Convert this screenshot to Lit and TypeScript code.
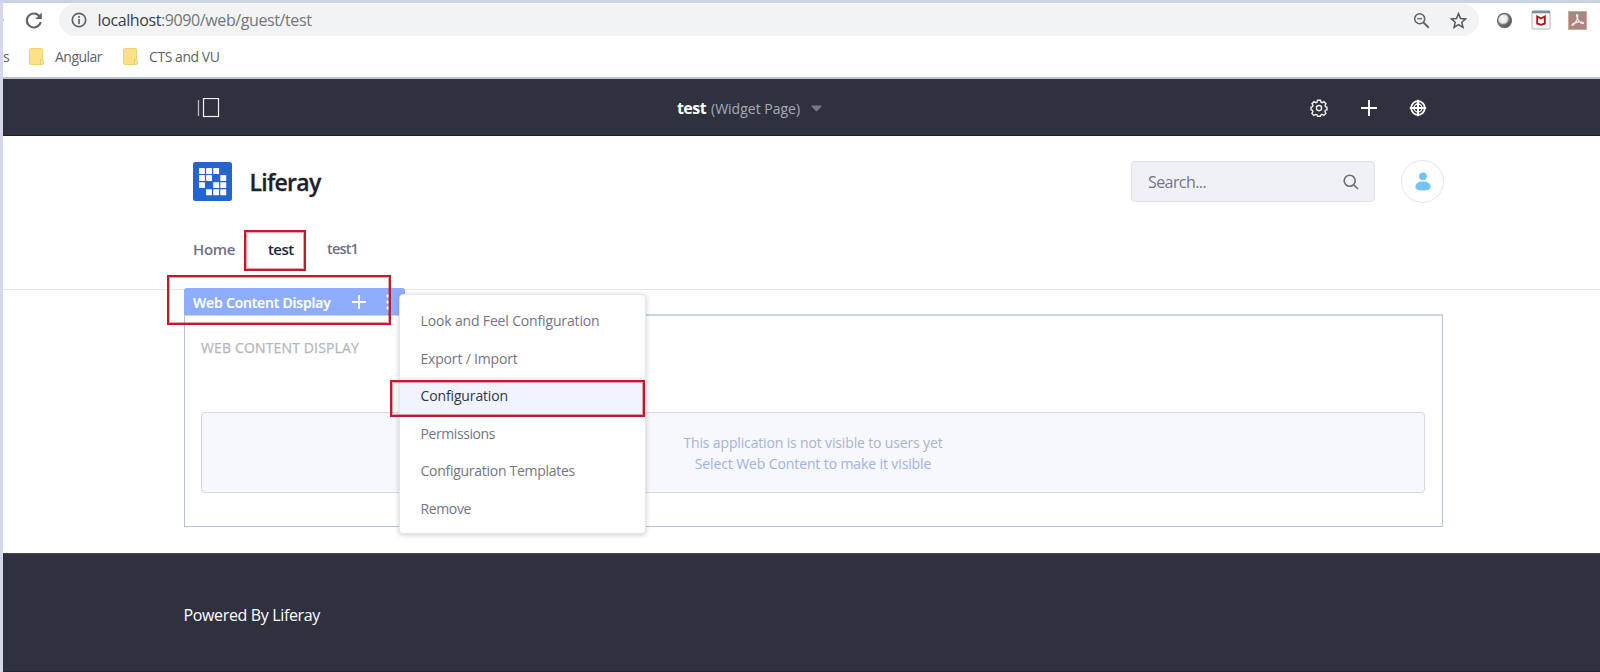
import { LitElement, html, svg, css } from "lit";
import { customElement } from "lit/decorators.js";
import { styleMap } from "lit/directives/style-map.js";

interface MenuItem {
  label: string;
  tracking: number;
  active?: boolean;
}

const MENU: MenuItem[] = [
  { label: "Look and Feel Configuration", tracking: -0.153 },
  { label: "Export / Import", tracking: -0.186 },
  { label: "Configuration", tracking: -0.138, active: true },
  { label: "Permissions", tracking: -0.414 },
  { label: "Configuration Templates", tracking: -0.277 },
  { label: "Remove", tracking: -0.373 },
];

// Filled cells of the brand mark, on a 4 x 4 grid.
const LOGO_CELLS = [
  [0, 0], [1, 0], [2, 0],
  [0, 1], [1, 1], [3, 1],
  [0, 2], [2, 2], [3, 2],
  [1, 3], [2, 3], [3, 3],
];

@customElement("browser-bar")
class BrowserBar extends LitElement {
  static styles = css`
    :host { display: block; height: 74px; background: #fff; border-bottom: 2px solid #bfc2cc; }
    svg { display: block; flex: none; }
    .row { display: flex; align-items: center; height: 34px; }
    .back { width: 22px; height: 20px; flex: none; }
    .omnibox { display: flex; align-items: center; margin-left: 16px; height: 32px; width: 1420px; flex: none; box-sizing: border-box; border-radius: 16px; background: #f2f3f5; padding: 0 12px; color: #73767b; }
    .url { flex: 1; margin-left: 10.5px; font-size: 16px; letter-spacing: -0.394px; line-height: 31px; }
    .host { color: #3c4046; }
    .tools { display: flex; gap: 20px; }
    .exts { display: flex; align-items: center; gap: 17.5px; margin-left: 17px; }
    .marks { display: flex; align-items: center; height: 38px; font-size: 14px; color: #606469; }
    .cut { width: 26px; }
    .angular { margin-left: 11px; letter-spacing: -0.523px; }
    .cts { margin-left: 11.5px; letter-spacing: -0.446px; }
    .second { margin-left: 20.5px; }
  `;

  private folder(cls = "") {
    return html`<svg class=${cls} width="15" height="17" viewBox="0 0 15 17">
      <rect x=".5" y=".5" width="13" height="16" rx="1" fill="#fbe184" stroke="#efd372"></rect>
      <path d="M11.5 11.5q3 0 3 2.5v1q0 1.5-1.5 1.5h-1.5z" fill="#fde98f" stroke="#e5c65a" stroke-width=".8"></path>
    </svg>`;
  }

  render() {
    return html`
      <div class="row">
        <svg class="back" viewBox="0 0 22 20"><circle cx="0" cy="10" r="1" fill="#b5b9bf"></circle></svg>
        <svg width="18" height="18" viewBox="0 0 18 18" fill="none">
          <path d="M14.6 5.4A7 7 0 1 0 15.7 11" stroke="#5f6368" stroke-width="2.1"></path>
          <path d="M16.8 1.5V8H10.300z" fill="#5f6368"></path>
        </svg>
        <div class="omnibox">
          <svg width="16" height="16" viewBox="0 0 16 16">
            <circle cx="8" cy="8" r="6.7" fill="none" stroke="#5f6368" stroke-width="1.7"></circle>
            <path d="M8 7v5M8 4v1.7" stroke="#5f6368" stroke-width="1.7"></path>
          </svg>
          <div class="url"><span class="host">localhost</span>:9090/web/guest/test</div>
          <div class="tools">
            <svg width="17" height="17" viewBox="0 0 17 17" fill="none" stroke="#5f6368">
              <circle cx="6.7" cy="6.7" r="5" stroke-width="1.5"></circle>
              <path d="M10.4 10.4l5.3 5.3" stroke-width="2"></path>
              <path d="M4.2 6.7h5" stroke-width="1.3"></path>
            </svg>
            <svg width="17" height="17" viewBox="0 0 17 17">
              <path d="M8.5 1.6l2 4.9 5.3.4-4 3.4 1.2 5.1-4.5-2.7L4 15.4l1.2-5.1-4-3.4 5.3-.4z" fill="none" stroke="#54585d" stroke-width="1.5"></path>
            </svg>
          </div>
        </div>
        <div class="exts">
          <svg width="17" height="17" viewBox="0 0 17 17">
            <defs>
              <radialGradient id="ball" cx=".4" cy=".38" r=".62">
                <stop offset="0" stop-color="#fff"></stop>
                <stop offset=".5" stop-color="#e4e4e4"></stop>
                <stop offset=".68" stop-color="#777"></stop>
                <stop offset="1" stop-color="#4a4a4a"></stop>
              </radialGradient>
            </defs>
            <circle cx="8.5" cy="8.5" r="7" fill="url(#ball)" stroke="#707070" stroke-width="1.3"></circle>
          </svg>
          <svg width="20" height="20" viewBox="0 0 20 20">
            <rect x="1" y="1" width="18" height="18" rx="1" fill="#f8f6f4" stroke="#aeb8bd"></rect>
            <path d="M1 2h18" stroke="#75909d" stroke-width="2.5"></path>
            <path d="M6.2 6.5l3.8 2 3.800-2v7L10 14.800l-3.8-1.3z" fill="#fff" stroke="#b3141f" stroke-width="1.9"></path>
          </svg>
          <svg width="19" height="19" viewBox="0 0 19 19">
            <rect x=".5" y=".5" width="18" height="18" fill="#a78782" stroke="#e0a296"></rect>
            <path d="M9 3.5c1.5 0 .8 3.6-.8 6.6-1.5 2.9-3.7 4.800-4.2 4.1-.6-1.2 4-3.2 7.3-3.4 3-.1 4.7.8 4 1.6-.9.9-3.500-.9-5-3.4C8.600 6.300 8 3.500 9 3.500z" fill="none" stroke="#f4efee" stroke-width="1.2"></path>
          </svg>
        </div>
      </div>
      <div class="marks">
        <span class="cut">s</span>
        ${this.folder()}
        <span class="angular">Angular</span>
        ${this.folder("second")}
        <span class="cts">CTS and VU</span>
      </div>
    `;
  }
}

@customElement("control-menu")
class ControlMenu extends LitElement {
  static styles = css`
    :host { display: grid; grid-template-columns: 474px auto 1fr; align-items: center; height: 57px; box-sizing: border-box; border-bottom: 1px solid #20212c; background: #30313f; padding: 2px 173px 0 193px; }
    svg { display: block; flex: none; }
    .title { display: flex; align-items: center; padding-left: 7px; font-size: 14px; color: #a7a9bc; }
    .name { font-size: 16px; font-weight: 700; color: #fff; letter-spacing: -0.574px; margin-right: 5px; }
    .caret { margin-left: 11px; }
    .actions { display: flex; justify-content: flex-end; align-items: center; gap: 31.5px; }
  `;
  render() {
    return html`
      <svg width="24" height="21" viewBox="0 0 24 21" fill="none">
        <path d="M2.5 2v16" stroke="#b9bac4" stroke-width="1.3"></path>
        <rect x="7.5" y=".5" width="15" height="18" stroke="#f1f1f5" stroke-width="1.2"></rect>
      </svg>
      <div class="title">
        <span class="name">test</span><span>(Widget Page)</span>
        <svg class="caret" width="11" height="7" viewBox="0 0 11 7"><path d="M1 .5h9q1 .3.4 1L6.2 6q-.7.6-1.4 0L.6 1.5Q0 .8 1 .5z" fill="#777989"></path></svg>
      </div>
      <div class="actions">
        <svg width="18" height="18" viewBox="0 0 18 18" fill="none" stroke="#f1f1f4">
          <path d="M7.5 1.2h3l.5 2 1.2.5 1.8-1 2 2-1 1.8.5 1.2 1.5.5v2.600l-1.6.5-.5 1.2 1 1.9-2 2-1.8-1-1.2.5-.5 1.4h-2.8L7 15.9l-1.2-.5-1.9 1-2-2 1-1.9-.5-1.2L1 10.8V8.200l1.500-.5L3 6.500 2 4.700l2-2 1.800 1L7 3.200z" stroke-width="1.4"></path>
          <circle cx="9" cy="9.1" r="2.6" stroke-width="1.4"></circle>
        </svg>
        <svg width="18" height="18" viewBox="0 0 18 18"><path d="M9 1v16M1 9h16" stroke="#fff" stroke-width="2"></path></svg>
        <svg width="18" height="18" viewBox="0 0 18 18" fill="none" stroke="#fff">
          <circle cx="9" cy="9" r="6.8" stroke-width="1.7"></circle>
          <circle cx="9" cy="9" r="4" stroke-width="1.3"></circle>
          <path d="M9 .8v16.400M.8 9h16.400" stroke-width="2"></path>
        </svg>
      </div>
    `;
  }
}

@customElement("site-header")
class SiteHeader extends LitElement {
  static styles = css`
    :host { display: block; height: 154px; box-sizing: border-box; border-bottom: 1px solid #e4e5ea; padding: 23px 156px 0 190px; }
    svg { display: block; flex: none; }
    .top { display: flex; align-items: center; height: 44px; }
    .brand { margin-left: 17.5px; font-size: 23px; font-weight: 600; letter-spacing: -0.723px; color: #1e1f2b; -webkit-text-stroke: 0.3px #1e1f2b; flex: 1; padding-top: 2px; }
    .search { display: flex; align-items: center; justify-content: space-between; width: 244px; height: 41px; box-sizing: border-box; border: 1px solid #e0e2e9; border-radius: 4px; background: #f0f1f5; padding: 1px 15px 0 16px; font-size: 16px; letter-spacing: -0.58px; color: #74768a; }
    .avatar { display: grid; place-items: center; width: 43px; height: 43px; box-sizing: border-box; border: 1px solid #e3e4ea; border-radius: 50%; margin-left: 26px; }
    .nav { display: flex; margin-top: 26px; height: 40px; line-height: 40px; font-size: 15px; font-weight: 600; color: #6f7182; }
    .home { width: 75px; letter-spacing: -0.345px; }
    .test { width: 59px; letter-spacing: -0.578px; color: #262734; }
    .test1 { font-size: 14.5px; letter-spacing: -0.83px; }
  `;
  render() {
    return html`
      <div class="top">
        <svg width="39" height="39" viewBox="0 0 39 39">
          <rect width="39" height="39" rx="2.5" fill="#2365cd"></rect>
          ${LOGO_CELLS.map(([cx, cy]) => svg`<rect x=${6 + cx * 7.1} y=${6 + cy * 7.1} width="5.9" height="5.9" rx=".4" fill="#fff"></rect>`)}
        </svg>
        <div class="brand">Liferay</div>
        <div class="search">
          <span>Search...</span>
          <svg width="16" height="16" viewBox="0 0 16 16" fill="none" stroke="#6b6c7e" stroke-width="1.6">
            <circle cx="6.7" cy="6.7" r="5.5"></circle><path d="M10.7 10.7l4.300 4.300"></path>
          </svg>
        </div>
        <div class="avatar">
          <svg width="16" height="19" viewBox="0 0 16 19" fill="#74c3f5">
            <circle cx="8" cy="4.3" r="3.9"></circle>
            <path d="M.4 14.8C.4 11.3 3.3 9.4 8 9.4s7.6 1.9 7.6 5.4c0 2.4-2.1 3.7-7.6 3.7S.4 17.2.4 14.8z"></path>
          </svg>
        </div>
      </div>
      <div class="nav">
        <span class="home">Home</span><span class="test">test</span><span class="test1">test1</span>
      </div>
    `;
  }
}

@customElement("portlet-menu")
class PortletMenu extends LitElement {
  static styles = css`
    :host { display: block; width: 247px; height: 240px; box-sizing: border-box; padding: 7px 0; background: #fff; border: 1px solid #e5e6eb; border-radius: 4px; box-shadow: 0 1px 5px rgba(39, 40, 51, 0.24); }
    .item { display: flex; align-items: center; height: 37.5px; padding-left: 21px; font-size: 14px; color: #747584; }
    .active { background: #f0f4ff; color: #343544; }
  `;
  render() {
    return MENU.map(
      (m) => html`<div class=${m.active ? "item active" : "item"} style=${styleMap({ letterSpacing: `${m.tracking}px` })}>${m.label}</div>`
    );
  }
}

@customElement("app-root")
class AppRoot extends LitElement {
  static styles = css`
    :host { display: block; position: relative; width: 1600px; height: 672px; overflow: hidden; box-sizing: border-box; border-top: 3px solid #c9d3e3; border-left: 3px solid #d3d9ea; background: #fff; font-family: "Open Sans", "Noto Sans", sans-serif; }
    svg { display: block; flex: none; }
    .main { display: flow-root; height: 263px; padding: 0 157px 0 181px; }
    .topper { display: flex; align-items: center; width: 221px; height: 27px; box-sizing: border-box; margin-top: -2px; padding-left: 9px; position: relative; border-radius: 3px 3px 0 0; background: #8fadff; color: #fff; }
    .ttl { width: 159px; font-size: 14px; font-weight: 600; letter-spacing: -0.176px; padding-top: 1px; -webkit-text-stroke: 0.2px #fff; }
    .dots { margin-left: 18.5px; }
    .portlet { height: 213px; width: 1259px; margin-top: -1px; box-sizing: border-box; border: 1px solid #b6c4da; border-top: 2px solid #c6d4e6; padding: 20px 17px 0 16px; }
    .heading { height: 24px; line-height: 24px; font-size: 14px; font-weight: 500; letter-spacing: 0.149px; color: #b5b6bb; -webkit-text-stroke: 0.25px #b5b6bb; }
    .notice { display: flex; flex-direction: column; align-items: center; justify-content: center; height: 81px; box-sizing: border-box; margin-top: 52px; border: 1px solid #d5d8e4; border-radius: 4px; background: #f7f8fd; font-size: 14px; line-height: 21px; color: #a9b3cf; }
    .first { letter-spacing: -0.151px; }
    .link { letter-spacing: -0.112px; color: #9cb2e4; }
    .footer { height: 119px; box-sizing: border-box; background: #30313f; border-top: 1px solid #454651; border-bottom: 1px solid #242530; padding: 48px 0 0 180.5px; line-height: 26px; font-size: 16px; letter-spacing: -0.351px; color: #fff; }
    .menu { position: absolute; left: 395.5px; top: 291px; }
    .mark { position: absolute; box-sizing: border-box; border: 2px solid #c01c28; box-shadow: inset 0 0 0 1px rgba(192, 28, 40, 0.4); }
    .m-nav { left: 241px; top: 227px; width: 62px; height: 41px; }
    .m-topper { left: 164px; top: 272px; width: 224px; height: 50px; }
    .m-config { left: 387px; top: 377px; width: 255px; height: 37px; }
  `;
  render() {
    return html`
      <browser-bar></browser-bar>
      <control-menu></control-menu>
      <site-header></site-header>
      <div class="main">
        <div class="topper">
          <span class="ttl">Web Content Display</span>
          <svg width="14" height="14" viewBox="0 0 14 14"><path d="M7 0v14M0 7h14" stroke="#fff" stroke-width="1.8"></path></svg>
          <svg class="dots" width="6" height="16" viewBox="0 0 6 16" fill="#fff">
            <circle cx="3" cy="2" r="1.7"></circle><circle cx="3" cy="8" r="1.7"></circle><circle cx="3" cy="14" r="1.7"></circle>
          </svg>
        </div>
        <div class="portlet">
          <div class="heading">WEB CONTENT DISPLAY</div>
          <div class="notice">
            <span class="first">This application is not visible to users yet</span>
            <span class="link">Select Web Content to make it visible</span>
          </div>
        </div>
      </div>
      <div class="footer">Powered By Liferay</div>
      <portlet-menu class="menu"></portlet-menu>
      <div class="mark m-nav"></div>
      <div class="mark m-topper"></div>
      <div class="mark m-config"></div>
    `;
  }
}
